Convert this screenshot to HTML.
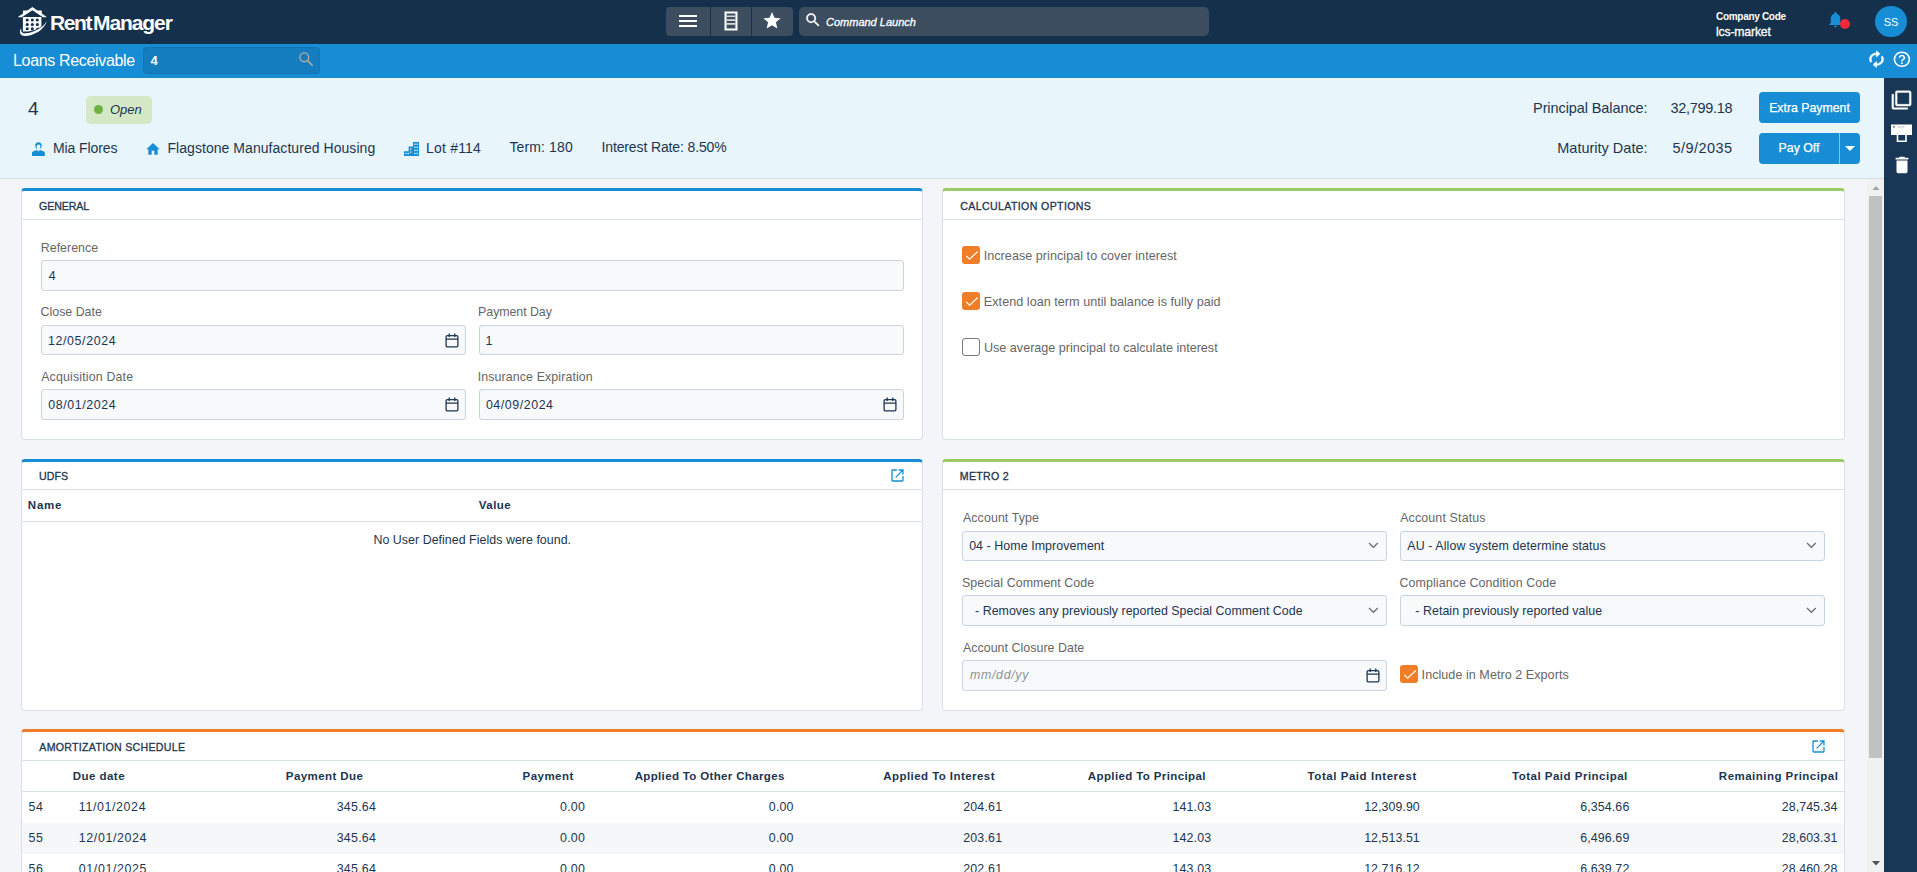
<!DOCTYPE html>
<html lang="en">
<head>
<meta charset="utf-8">
<title>Loans Receivable - Rent Manager</title>
<style>
*{box-sizing:border-box;margin:0;padding:0}
html,body{width:1917px;height:872px;overflow:hidden;background:#f3f5f8;font-family:"Liberation Sans",sans-serif;color:#1c3550}
.abs{position:absolute}
#top{position:absolute;left:0;top:0;width:1917px;height:44px;background:#14304b}
#bar{position:absolute;left:0;top:44px;width:1917px;height:34px;background:#168dd4}
#hdr{position:absolute;left:0;top:78px;width:1884px;height:101px;background:#e8f5fb;border-bottom:1px solid #d9dee4}
#side{position:absolute;left:1884px;top:78px;width:33px;height:794px;background:#183656}
#main{position:absolute;left:0;top:179px;width:1884px;height:693px;background:#f3f5f8;overflow:hidden}
.t{position:absolute;white-space:nowrap;line-height:1}
.panel{position:absolute;background:#fff;border:1px solid #dbe2ea;border-radius:4px;border-top:3px solid #168dd4}
.panel.g{border-top-color:#9bcb65}
.panel.o{border-top-color:#f07d28}
.lbl{font-size:12.4px;line-height:15px;color:#666}
.iv{font-size:12.4px;line-height:15px;color:#1c3550}
.ph2{font-style:italic;color:#909498}
.pt{font-size:10.6px;line-height:13px;color:#1c3550;-webkit-text-stroke:.3px #1c3550}
.cb{position:absolute;width:18px;height:18px;border-radius:3px;background:#f07d28}
.cb.off{background:#fff;border:1px solid #777}
.cbl{font-size:12.6px;line-height:15px;color:#666}
.th{font-size:11.5px;font-weight:bold;color:#1c3550;line-height:13px}
.td{font-size:12.4px;color:#1c3550;line-height:15px}
.hi{font-size:14px;line-height:16px;color:#1c3550}
.hr{font-size:14.500px;line-height:16px;color:#1c3550;text-align:right}
.btn{background:#168dd4;border-radius:4px;color:#fff;font-size:12.300px;line-height:31px;text-align:center;white-space:nowrap;-webkit-text-stroke:.25px #fff}
.r{text-align:right}
</style>
</head>
<body>
<!-- TOP BAR -->
<div id="top">
<svg class="abs" style="left:18px;top:7px" width="30" height="30" viewBox="0 0 30 31" preserveAspectRatio="none">
<path d="M14.4 0 L19.5 3.600 L23.800 3.600 L23.800 6.600 L28.400 10 L28.400 10.600 L25 10.600 L14.400 3.300 L3.800 10.600 L0.200 10.600 L0.200 10 L5 6.600 L5 3.600 L9.300 3.600 Z" fill="#fff"/>
<path d="M4.900 10.400 H23.400 V20 C21 22.500 16 24.600 10 25.200 L4.900 25.400 Z" fill="#fff"/>
<g fill="#14304b"><circle cx="9.200" cy="13.400" r="1.550"/><circle cx="14.300" cy="13.400" r="1.550"/><circle cx="19.300" cy="13.400" r="1.550"/><circle cx="9.200" cy="18" r="1.550"/><circle cx="14.300" cy="18" r="1.550"/><circle cx="19.300" cy="18" r="1.550"/><circle cx="9.200" cy="22.500" r="1.550"/><circle cx="14.300" cy="22.500" r="1.550"/><path d="M17.800 22.400 l3 -1.500 v1.600 l-2.600 1.200 z"/></g>
<path d="M3.200 21.600 C0.800 25 1.600 29.800 7 30 C15 29.800 26.500 24 29 14.200 C25.500 21.500 15 26.800 7.200 27.200 C3.600 27.200 2.600 24.600 3.200 21.600 Z" fill="#fff"/>
</svg>
<div class="t" id="logotxt" style="left:50px;top:11px;font-size:21px;font-weight:bold;color:#fff;letter-spacing:-1.1px;line-height:24px"><span style="letter-spacing:-1.4px">Rent</span><span style="margin-left:2px">Manager</span></div>
<div class="abs" style="left:666px;top:7px;width:127px;height:29px;background:#3b4d5e;border-radius:4px"></div>
<div class="abs" style="left:710px;top:7px;width:1px;height:29px;background:#14304b"></div>
<div class="abs" style="left:751px;top:7px;width:1px;height:29px;background:#14304b"></div>
<svg class="abs" style="left:679px;top:14px" width="18" height="14" viewBox="0 0 18 14"><path d="M0 1h18v2H0zM0 6h18v2H0zM0 11h18v2H0z" fill="#fff"/></svg>
<svg class="abs" style="left:723px;top:11px" width="16" height="20" viewBox="0 0 16 20"><path d="M1.5 0.5h13v19h-13z M3.600 2.600v14.800h8.800V2.600z" fill="#fff" fill-rule="evenodd"/><path d="M3.600 4.400h8.800v1.700H3.600zM3.600 8.200h8.800v1.700H3.600zM3.600 12h8.800v1.700H3.600z" fill="#d5dade"/></svg>
<svg class="abs" style="left:763px;top:12px" width="18" height="17" viewBox="0 0 24 23"><path d="M12 17.8 L19.2 22.2 L17.3 14 L23.7 8.5 L15.3 7.8 L12 0 L8.7 7.8 L0.3 8.5 L6.7 14 L4.8 22.2 Z" fill="#fff"/></svg>
<div class="abs" style="left:799px;top:7px;width:410px;height:29px;background:#3b4d5e;border-radius:5px"></div>
<svg class="abs" style="left:804px;top:11px" width="18" height="18" viewBox="0 0 24 24"><path d="M15.5 14h-.79l-.28-.27A6.471 6.471 0 0 0 16 9.5 6.5 6.5 0 1 0 9.5 16c1.61 0 3.09-.59 4.23-1.57l.27.28v.79l5 4.99L20.490 19l-4.990-5zm-6 0C7.010 14 5 11.990 5 9.500S7.010 5 9.500 5 14 7.010 14 9.500 11.990 14 9.500 14z" fill="#fff" stroke="#fff" stroke-width=".3"/></svg>
<div class="t" style="left:826px;top:16px;font-size:11px;font-style:italic;color:#fff;line-height:12px;-webkit-text-stroke:.3px #fff" id="cmd">Command Launch</div>
<div class="t" style="left:1716px;top:11px;font-size:10px;font-weight:bold;color:#fff;line-height:11px;letter-spacing:-.3px" id="cc">Company Code</div>
<div class="t" style="left:1716px;top:25px;font-size:12.2px;color:#fff;line-height:14px;-webkit-text-stroke:.3px #fff;letter-spacing:-.15px" id="lcs">lcs-market</div>
<svg class="abs" style="left:1825.500px;top:9.700px" width="19" height="19" viewBox="0 0 24 24"><path d="M12 22c1.100 0 2-.9 2-2h-4c0 1.100.89 2 2 2zm6-6v-5c0-3.070-1.640-5.640-4.500-6.320V4c0-.83-.67-1.500-1.500-1.500s-1.500.67-1.500 1.500v.68C7.630 5.360 6 7.920 6 11v5l-2 2v1h16v-1l-2-2z" fill="#168dd4"/></svg>
<div class="abs" style="left:1840px;top:19px;width:10px;height:10px;border-radius:5px;background:#ee2b3b"></div>
<div class="abs" style="left:1875px;top:5.700px;width:32px;height:31.400px;border-radius:16px;background:#168dd4"></div>
<div class="t" style="left:1875px;top:16px;width:32px;text-align:center;font-size:11px;color:#fff;line-height:13px">SS</div>
</div>
<!-- BLUE BAR -->
<div id="bar">
<div class="t" id="lr" style="left:13px;top:7px;font-size:16px;color:#fff;line-height:20px;letter-spacing:-.33px">Loans Receivable</div>
<div class="abs" style="left:143px;top:3px;width:177px;height:27px;background:#137dc0;border:1px solid #1274b3;border-radius:4px"></div>
<div class="t" style="left:150.600px;top:10px;font-size:13px;font-weight:bold;color:#fff;line-height:14px">4</div>
<svg class="abs" style="left:298px;top:7px" width="16" height="16" viewBox="0 0 16 16"><circle cx="6.3" cy="6.3" r="4.4" fill="none" stroke="#b3a79f" stroke-width="1.4"/><path d="M9.4 9.4 L14.6 14.6" stroke="#b3a79f" stroke-width="1.5" fill="none"/></svg>
<svg class="abs" style="left:1865.800px;top:6.100px;transform:scaleX(-1)" width="21" height="18.400" viewBox="0 0 24 24" preserveAspectRatio="none"><path d="M12 4V1L8 5l4 4V6c3.310 0 6 2.690 6 6 0 1.010-.25 1.970-.7 2.800l1.460 1.460A7.930 7.930 0 0 0 20 12c0-4.420-3.580-8-8-8zm0 14c-3.310 0-6-2.690-6-6 0-1.010.25-1.970.7-2.800L5.240 7.740A7.930 7.930 0 0 0 4 12c0 4.420 3.580 8 8 8v3l4-4-4-4v3z" fill="#fff" stroke="#fff" stroke-width=".7"/></svg>
<svg class="abs" style="left:1891.700px;top:6.100px" width="19.800" height="18.600" viewBox="0 0 24 24" preserveAspectRatio="none"><path d="M11 18h2v-2h-2v2zm1-16C6.480 2 2 6.480 2 12s4.480 10 10 10 10-4.480 10-10S17.520 2 12 2zm0 18c-4.410 0-8-3.590-8-8s3.590-8 8-8 8 3.590 8 8-3.590 8-8 8zm0-14c-2.210 0-4 1.790-4 4h2c0-1.100.9-2 2-2s2 .9 2 2c0 2-3 1.750-3 5h2c0-2.250 3-2.500 3-5 0-2.210-1.790-4-4-4z" fill="#fff"/></svg>
</div>
<!-- HEADER -->
<div id="hdr">
<div class="t" style="left:28px;top:20px;font-size:19px;line-height:22px;color:#1c3550">4</div>
<div class="abs" style="left:86px;top:18px;width:66px;height:28px;background:#d4e8c6;border-radius:5px"></div>
<div class="abs" style="left:94px;top:27px;width:9px;height:9px;border-radius:5px;background:#6db33f"></div>
<div class="t" id="open" style="left:110px;top:24px;font-size:13px;font-style:italic;line-height:15px;color:#1c3550">Open</div>
<svg class="abs" style="left:32px;top:64px" width="13" height="14" viewBox="0 0 13 14"><path d="M6.500 0.200c1.900 0 3.100 1.300 3.100 3.200 0 1.500-.7 2.900-1.600 3.600v.9l3.400 1.300c.9.400 1.500 1.100 1.500 2.100v2.700H0v-2.700c0-1 .6-1.700 1.500-2.100l3.400-1.300V7c-.9-.7-1.600-2.100-1.600-3.600 0-1.900 1.300-3.200 3.200-3.200z" fill="#168dd4"/><path d="M4.600 7.600 L6.500 9.600 L8.400 7.600 V6.500 H4.600Z" fill="#e8f5fb"/><ellipse cx="6.500" cy="4.400" rx="1.900" ry="2.500" fill="#e8f5fb"/><path d="M3.300 3.600 C3.300 0 9.700 0 9.700 3.600 C8.500 2.600 6.500 2.300 5.200 2.900 C4.300 3.200 3.700 3.400 3.300 3.600Z" fill="#168dd4"/></svg>
<div class="t hi" id="mia" style="left:53px;top:62px;letter-spacing:-.1px">Mia Flores</div>
<svg class="abs" style="left:145px;top:62.700px" width="16" height="16.500" viewBox="0 0 24 24" preserveAspectRatio="none"><path d="M10 20v-6h4v6h5v-8h3L12 3 2 12h3v8z" fill="#168dd4"/></svg>
<div class="t hi" id="flag" style="left:167.500px;top:62px;letter-spacing:.05px">Flagstone Manufactured Housing</div>
<svg class="abs" style="left:404px;top:64px" width="15" height="14" viewBox="0 0 15 14"><path d="M9 0h6v14H0V9.200h4.600V4.600H9z" fill="#168dd4"/><g fill="#dceefa"><rect x="10.200" y="1.500" width="1.400" height="1.400"/><rect x="12.500" y="1.500" width="1.400" height="1.400"/><rect x="10.200" y="4.600" width="1.400" height="1.400"/><rect x="12.500" y="4.600" width="1.400" height="1.400"/><rect x="10.200" y="7.700" width="1.400" height="1.400"/><rect x="12.500" y="7.700" width="1.400" height="1.400"/><rect x="10.200" y="10.800" width="1.400" height="1.400"/><rect x="12.500" y="10.800" width="1.400" height="1.400"/><rect x="6" y="6.300" width="1.400" height="1.400"/><rect x="6" y="9.400" width="1.400" height="1.400"/><rect x="1.300" y="10.800" width="1.400" height="1.400"/><rect x="3.600" y="10.800" width="1.400" height="1.400"/></g></svg>
<div class="t hi" id="lot" style="left:426px;top:62px;letter-spacing:.2px">Lot #114</div>
<div class="t hi" id="term" style="left:509.500px;top:61px;letter-spacing:.12px">Term: 180</div>
<div class="t hi" id="ir" style="left:601.500px;top:61px;letter-spacing:-.13px">Interest Rate: 8.50%</div>
<div class="t hr" id="pb" style="right:236.500px;top:22px;letter-spacing:-.09px">Principal Balance:</div>
<div class="t hr" id="pbv" style="right:151.700px;top:22px;letter-spacing:-.3px">32,799.18</div>
<div class="t hr" id="md" style="right:236.500px;top:62px">Maturity Date:</div>
<div class="t hr" id="mdv" style="right:151.500px;top:62px;letter-spacing:.45px">5/9/2035</div>
<div class="abs btn" style="left:1759px;top:14px;width:101px;height:31px;line-height:33px" id="ep">Extra Payment</div>
<div class="abs btn" style="left:1759px;top:55px;width:80px;height:31px;border-radius:4px 0 0 4px" id="po">Pay Off</div>
<div class="abs" style="left:1839px;top:55px;width:1px;height:31px;background:#8cc4e8"></div>
<div class="abs btn" style="left:1840px;top:55px;width:20px;height:31px;border-radius:0 4px 4px 0"></div>
<svg class="abs" style="left:1845px;top:68px" width="10" height="5" viewBox="0 0 10 5"><path d="M0 0h10L5 5z" fill="#fff"/></svg>
</div>
<!-- SIDE -->
<div id="side">
<svg class="abs" style="left:7.200px;top:12px" width="21" height="20.200" viewBox="0 0 24 24" preserveAspectRatio="none"><path d="M3 5H1v16c0 1.100.9 2 2 2h16v-2H3V5zm18-4H7c-1.100 0-2 .9-2 2v14c0 1.100.9 2 2 2h14c1.100 0 2-.9 2-2V3c0-1.100-.9-2-2-2zm0 16H7V3h14v14z" fill="#fff" stroke="#fff" stroke-width=".5"/></svg>
<svg class="abs" style="left:7px;top:46px" width="21" height="19" viewBox="0 0 21 19"><path d="M0 0.500h21v10.500H0z" fill="#fff"/><path d="M6.500 10.300h8.500v7h-8.500z" fill="#183656" stroke="#fff" stroke-width="1.600"/><rect x="2.200" y="2.200" width="1.400" height="1.400" fill="#183656"/><rect x="6.500" y="2.600" width="7" height=".7" fill="#9aa8b8"/></svg>
<svg class="abs" style="left:6.700px;top:76.300px" width="22" height="22" viewBox="0 0 24 24"><path d="M6 19c0 1.100.9 2 2 2h8c1.100 0 2-.9 2-2V7H6v12zM19 4h-3.500l-1-1h-5l-1 1H5v2h14V4z" fill="#fff"/></svg>
</div>
<!-- MAIN -->
<div id="main">
<div class="abs" style="left:21px;top:9px;width:902px;height:252px;background:#fff;border:1px solid #d9e0e8;border-top:3px solid #168dd4;border-radius:4px"></div><div class="abs" style="left:22px;top:40px;width:900px;height:1px;background:#d9e0e8"></div>
<div class="abs" style="left:942px;top:9px;width:903px;height:252px;background:#fff;border:1px solid #d9e0e8;border-top:3px solid #9bcb65;border-radius:4px"></div><div class="abs" style="left:943px;top:40px;width:901px;height:1px;background:#d9e0e8"></div>
<div class="abs" style="left:21px;top:280px;width:902px;height:252px;background:#fff;border:1px solid #d9e0e8;border-top:3px solid #168dd4;border-radius:4px"></div><div class="abs" style="left:22px;top:310px;width:900px;height:1px;background:#d9e0e8"></div>
<div class="abs" style="left:942px;top:280px;width:903px;height:252px;background:#fff;border:1px solid #d9e0e8;border-top:3px solid #9bcb65;border-radius:4px"></div><div class="abs" style="left:943px;top:310px;width:901px;height:1px;background:#d9e0e8"></div>
<div class="abs" style="left:21px;top:550px;width:1824px;height:160px;background:#fff;border:1px solid #d9e0e8;border-top:3px solid #f07d28;border-radius:4px 4px 0 0;border-bottom:none"></div><div class="abs" style="left:22px;top:581px;width:1822px;height:1px;background:#d9e0e8"></div>
<div class="abs" style="left:41px;top:81px;width:863px;height:31px;background:#f7f9fb;border:1px solid #c6d4e3;border-radius:3px"></div>
<div class="abs" style="left:41px;top:146px;width:425px;height:30px;background:#f7f9fb;border:1px solid #c6d4e3;border-radius:3px"></div>
<svg class="abs" style="left:445px;top:154px" width="14" height="15" viewBox="0 0 14 15"><rect x="1.100" y="2.600" width="11.800" height="11.300" rx="1.300" fill="none" stroke="#1c3550" stroke-width="1.300"/><path d="M1.100 6.200h11.800M4.200 0.600v3.400M9.800 0.600v3.400" stroke="#1c3550" stroke-width="1.300" fill="none"/></svg>
<div class="abs" style="left:479px;top:146px;width:425px;height:30px;background:#f7f9fb;border:1px solid #c6d4e3;border-radius:3px"></div>
<div class="abs" style="left:41px;top:210px;width:425px;height:31px;background:#f7f9fb;border:1px solid #c6d4e3;border-radius:3px"></div>
<svg class="abs" style="left:445px;top:218px" width="14" height="15" viewBox="0 0 14 15"><rect x="1.100" y="2.600" width="11.800" height="11.300" rx="1.300" fill="none" stroke="#1c3550" stroke-width="1.300"/><path d="M1.100 6.200h11.800M4.200 0.600v3.400M9.800 0.600v3.400" stroke="#1c3550" stroke-width="1.300" fill="none"/></svg>
<div class="abs" style="left:479px;top:210px;width:425px;height:31px;background:#f7f9fb;border:1px solid #c6d4e3;border-radius:3px"></div>
<svg class="abs" style="left:883px;top:218px" width="14" height="15" viewBox="0 0 14 15"><rect x="1.100" y="2.600" width="11.800" height="11.300" rx="1.300" fill="none" stroke="#1c3550" stroke-width="1.300"/><path d="M1.100 6.200h11.800M4.200 0.600v3.400M9.800 0.600v3.400" stroke="#1c3550" stroke-width="1.300" fill="none"/></svg>
<div class="cb" style="left:962px;top:67px"><svg width="18" height="18" viewBox="0 0 18 18" style="position:absolute;left:0;top:0"><path d="M4.300 9.900l3.300 3.200L15.800 5.500" fill="none" stroke="#fff" stroke-width="1.150"/></svg></div>
<div class="cb" style="left:962px;top:113px"><svg width="18" height="18" viewBox="0 0 18 18" style="position:absolute;left:0;top:0"><path d="M4.300 9.900l3.300 3.200L15.800 5.500" fill="none" stroke="#fff" stroke-width="1.150"/></svg></div>
<div class="cb off" style="left:962px;top:159px"></div>
<svg class="abs" style="left:891px;top:290px" width="13" height="13" viewBox="0 0 14 14"><path d="M12.200 7.600V12.200H1.800V1.800H6.400V0.400H1.800C1 0.400 .4 1 .4 1.800V12.200C.4 13 1 13.600 1.800 13.600H12.200C13 13.600 13.600 13 13.600 12.200V7.600Z M8.200 .4V1.800H11.200L4.500 8.500L5.500 9.500L12.200 2.800V5.800H13.600V.4Z" fill="#168dd4"/></svg>
<div class="abs" style="left:22px;top:342px;width:900px;height:1px;background:#d9e0e8"></div>
<div class="abs" style="left:962px;top:352px;width:425px;height:30px;background:#f7f9fb;border:1px solid #c6d4e3;border-radius:3px"></div>
<svg class="abs" style="left:1368px;top:363px" width="11" height="7" viewBox="0 0 11 7"><path d="M1 1l4.400 4.300l4.400-4.300" fill="none" stroke="#666e77" stroke-width="1.250"/></svg>
<div class="abs" style="left:1400px;top:352px;width:425px;height:30px;background:#f7f9fb;border:1px solid #c6d4e3;border-radius:3px"></div>
<svg class="abs" style="left:1806px;top:363px" width="11" height="7" viewBox="0 0 11 7"><path d="M1 1l4.400 4.300l4.400-4.300" fill="none" stroke="#666e77" stroke-width="1.250"/></svg>
<div class="abs" style="left:962px;top:416px;width:425px;height:31px;background:#f7f9fb;border:1px solid #c6d4e3;border-radius:3px"></div>
<svg class="abs" style="left:1368px;top:428px" width="11" height="7" viewBox="0 0 11 7"><path d="M1 1l4.400 4.300l4.400-4.300" fill="none" stroke="#666e77" stroke-width="1.250"/></svg>
<div class="abs" style="left:1400px;top:416px;width:425px;height:31px;background:#f7f9fb;border:1px solid #c6d4e3;border-radius:3px"></div>
<svg class="abs" style="left:1806px;top:428px" width="11" height="7" viewBox="0 0 11 7"><path d="M1 1l4.400 4.300l4.400-4.300" fill="none" stroke="#666e77" stroke-width="1.250"/></svg>
<div class="abs" style="left:962px;top:481px;width:425px;height:31px;background:#f7f9fb;border:1px solid #c6d4e3;border-radius:3px"></div>
<svg class="abs" style="left:1366px;top:489px" width="14" height="15" viewBox="0 0 14 15"><rect x="1.100" y="2.600" width="11.800" height="11.300" rx="1.300" fill="none" stroke="#1c3550" stroke-width="1.300"/><path d="M1.100 6.200h11.800M4.200 0.600v3.400M9.800 0.600v3.400" stroke="#1c3550" stroke-width="1.300" fill="none"/></svg>
<div class="cb" style="left:1400px;top:486px"><svg width="18" height="18" viewBox="0 0 18 18" style="position:absolute;left:0;top:0"><path d="M4.300 9.900l3.300 3.200L15.800 5.500" fill="none" stroke="#fff" stroke-width="1.150"/></svg></div>
<svg class="abs" style="left:1812px;top:561px" width="13" height="13" viewBox="0 0 14 14"><path d="M12.200 7.600V12.200H1.800V1.800H6.400V0.400H1.800C1 0.400 .4 1 .4 1.800V12.200C.4 13 1 13.600 1.800 13.600H12.200C13 13.600 13.600 13 13.600 12.200V7.600Z M8.200 .4V1.800H11.200L4.500 8.500L5.500 9.500L12.200 2.800V5.800H13.600V.4Z" fill="#168dd4"/></svg>
<div class="abs" style="left:22px;top:612px;width:1822px;height:1px;background:#d9e0e8"></div>
<div class="abs" style="left:22px;top:644px;width:1822px;height:31px;background:#f6f7f9"></div>
<div class="t pt" id="p_gen" style="left:39.03px;top:21px;letter-spacing:-0.093px">GENERAL</div>
<div class="t pt" id="p_calc" style="left:960.26px;top:21px;letter-spacing:0.370px">CALCULATION OPTIONS</div>
<div class="t pt" id="p_udfs" style="left:38.95px;top:291px;letter-spacing:0.089px">UDFS</div>
<div class="t pt" id="p_metro" style="left:959.87px;top:291px;letter-spacing:0.281px">METRO 2</div>
<div class="t pt" id="p_amort" style="left:39.30px;top:562px;letter-spacing:0.299px">AMORTIZATION SCHEDULE</div>
<div class="t lbl" id="l_ref" style="left:40.78px;top:62px;letter-spacing:0.015px">Reference</div>
<div class="t lbl" id="l_close" style="left:40.55px;top:126px;letter-spacing:-0.004px">Close Date</div>
<div class="t lbl" id="l_payday" style="left:478.12px;top:126px;letter-spacing:-0.062px">Payment Day</div>
<div class="t lbl" id="l_acq" style="left:41.14px;top:191px;letter-spacing:0.162px">Acquisition Date</div>
<div class="t lbl" id="l_ins" style="left:477.70px;top:191px;letter-spacing:0.109px">Insurance Expiration</div>
<div class="t lbl" id="l_at" style="left:962.96px;top:332px;letter-spacing:0.098px">Account Type</div>
<div class="t lbl" id="l_as" style="left:1400.14px;top:332px;letter-spacing:0.159px">Account Status</div>
<div class="t lbl" id="l_scc" style="left:962.04px;top:397px;letter-spacing:0.068px">Special Comment Code</div>
<div class="t lbl" id="l_ccc" style="left:1399.55px;top:397px;letter-spacing:0.095px">Compliance Condition Code</div>
<div class="t lbl" id="l_acd" style="left:962.96px;top:462px;letter-spacing:0.041px">Account Closure Date</div>
<div class="t iv" id="v_ref" style="left:48.67px;top:90px;letter-spacing:0.000px">4</div>
<div class="t iv" id="v_close" style="left:47.92px;top:155px;letter-spacing:0.632px">12/05/2024</div>
<div class="t iv" id="v_payday" style="left:485.41px;top:155px;letter-spacing:0.000px">1</div>
<div class="t iv" id="v_acq" style="left:48.36px;top:219px;letter-spacing:0.582px">08/01/2024</div>
<div class="t iv" id="v_ins" style="left:485.90px;top:219px;letter-spacing:0.565px">04/09/2024</div>
<div class="t iv" id="v_at" style="left:969.13px;top:360px;letter-spacing:0.078px">04 - Home Improvement</div>
<div class="t iv" id="v_as" style="left:1407.27px;top:360px;letter-spacing:0.110px">AU - Allow system determine status</div>
<div class="t iv" id="v_scc" style="left:975.08px;top:425px;letter-spacing:0.019px">- Removes any previously reported Special Comment Code</div>
<div class="t iv" id="v_ccc" style="left:1415.37px;top:425px;letter-spacing:0.045px">- Retain previously reported value</div>
<div class="t iv ph2" id="v_acd" style="left:969.92px;top:489px;letter-spacing:0.689px">mm/dd/yy</div>
<div class="t cbl" id="c_1" style="left:983.70px;top:70px;letter-spacing:0.038px">Increase principal to cover interest</div>
<div class="t cbl" id="c_2" style="left:983.87px;top:116px;letter-spacing:0.034px">Extend loan term until balance is fully paid</div>
<div class="t cbl" id="c_3" style="left:983.99px;top:162px;letter-spacing:-0.003px">Use average principal to calculate interest</div>
<div class="t cbl" id="c_4" style="left:1421.61px;top:489px;letter-spacing:0.032px">Include in Metro 2 Exports</div>
<div class="t th" id="h_name" style="left:27.86px;top:320px;letter-spacing:0.742px">Name</div>
<div class="t th" id="h_value" style="left:478.80px;top:320px;letter-spacing:0.458px">Value</div>
<div class="t th" id="h_due" style="left:72.71px;top:591px;letter-spacing:0.469px">Due date</div>
<div class="t th" id="h_pd" style="left:285.86px;top:591px;letter-spacing:0.416px">Payment Due</div>
<div class="t th" id="h_pay" style="left:522.59px;top:591px;letter-spacing:0.459px">Payment</div>
<div class="t th" id="h_oc" style="left:634.66px;top:591px;letter-spacing:0.349px">Applied To Other Charges</div>
<div class="t th" id="h_ai" style="left:883.26px;top:591px;letter-spacing:0.443px">Applied To Interest</div>
<div class="t th" id="h_ap" style="left:1087.79px;top:591px;letter-spacing:0.388px">Applied To Principal</div>
<div class="t th" id="h_tpi" style="left:1307.58px;top:591px;letter-spacing:0.552px">Total Paid Interest</div>
<div class="t th" id="h_tpp" style="left:1512.00px;top:591px;letter-spacing:0.497px">Total Paid Principal</div>
<div class="t th" id="h_rp" style="left:1718.86px;top:591px;letter-spacing:0.472px">Remaining Principal</div>
<div class="t td" id="d_nou" style="left:373.45px;top:354px;letter-spacing:0.040px">No User Defined Fields were found.</div>
<div class="t td" id="r0c0" style="left:28.42px;top:621px;letter-spacing:0.827px">54</div>
<div class="t td" id="r0c1" style="left:78.81px;top:621px;letter-spacing:0.627px">11/01/2024</div>
<div class="t td" id="r0c2" style="right:1507.91px;top:621px;letter-spacing:0.242px">345.64</div>
<div class="t td" id="r0c3" style="right:1298.99px;top:621px;letter-spacing:0.201px">0.00</div>
<div class="t td" id="r0c4" style="right:1090.35px;top:621px;letter-spacing:0.181px">0.00</div>
<div class="t td" id="r0c5" style="right:881.71px;top:621px;letter-spacing:0.203px">204.61</div>
<div class="t td" id="r0c6" style="right:672.61px;top:621px;letter-spacing:0.180px">141.03</div>
<div class="t td" id="r0c7" style="right:464.19px;top:621px;letter-spacing:0.056px">12,309.90</div>
<div class="t td" id="r0c8" style="right:254.60px;top:621px;letter-spacing:0.128px">6,354.66</div>
<div class="t td" id="r0c9" style="right:46.52px;top:621px;letter-spacing:0.061px">28,745.34</div>
<div class="t td" id="r1c0" style="left:28.42px;top:652px;letter-spacing:0.827px">55</div>
<div class="t td" id="r1c1" style="left:78.81px;top:652px;letter-spacing:0.627px">12/01/2024</div>
<div class="t td" id="r1c2" style="right:1507.91px;top:652px;letter-spacing:0.242px">345.64</div>
<div class="t td" id="r1c3" style="right:1298.99px;top:652px;letter-spacing:0.201px">0.00</div>
<div class="t td" id="r1c4" style="right:1090.35px;top:652px;letter-spacing:0.181px">0.00</div>
<div class="t td" id="r1c5" style="right:881.71px;top:652px;letter-spacing:0.203px">203.61</div>
<div class="t td" id="r1c6" style="right:672.61px;top:652px;letter-spacing:0.180px">142.03</div>
<div class="t td" id="r1c7" style="right:464.19px;top:652px;letter-spacing:0.056px">12,513.51</div>
<div class="t td" id="r1c8" style="right:254.60px;top:652px;letter-spacing:0.128px">6,496.69</div>
<div class="t td" id="r1c9" style="right:46.52px;top:652px;letter-spacing:0.061px">28,603.31</div>
<div class="t td" id="r2c0" style="left:28.42px;top:683px;letter-spacing:0.827px">56</div>
<div class="t td" id="r2c1" style="left:78.81px;top:683px;letter-spacing:0.627px">01/01/2025</div>
<div class="t td" id="r2c2" style="right:1507.91px;top:683px;letter-spacing:0.242px">345.64</div>
<div class="t td" id="r2c3" style="right:1298.99px;top:683px;letter-spacing:0.201px">0.00</div>
<div class="t td" id="r2c4" style="right:1090.35px;top:683px;letter-spacing:0.181px">0.00</div>
<div class="t td" id="r2c5" style="right:881.71px;top:683px;letter-spacing:0.203px">202.61</div>
<div class="t td" id="r2c6" style="right:672.61px;top:683px;letter-spacing:0.180px">143.03</div>
<div class="t td" id="r2c7" style="right:464.19px;top:683px;letter-spacing:0.056px">12,716.12</div>
<div class="t td" id="r2c8" style="right:254.60px;top:683px;letter-spacing:0.128px">6,639.72</div>
<div class="t td" id="r2c9" style="right:46.52px;top:683px;letter-spacing:0.061px">28,460.28</div>
<div class="abs" style="left:1867px;top:0px;width:17px;height:693px;background:#f1f1f1"></div>
<div class="abs" style="left:1869px;top:17px;width:13px;height:562px;background:#c1c1c1"></div>
<svg class="abs" style="left:1871.500px;top:6.699999999999989px" width="8" height="4.500" viewBox="0 0 9 5"><path d="M0 5h9L4.500 0z" fill="#a3a3a3"/></svg>
<svg class="abs" style="left:1871.500px;top:682px" width="8" height="4.500" viewBox="0 0 9 5"><path d="M0 0h9L4.500 5z" fill="#505050"/></svg>
</div>
</body>
</html>
